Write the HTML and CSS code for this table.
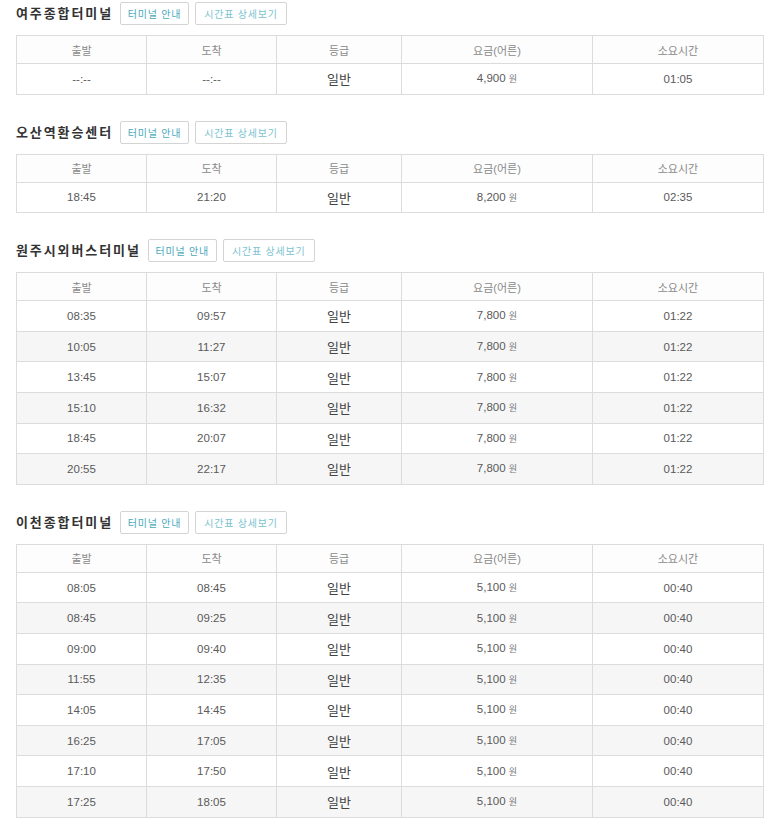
FILE: index.html
```html
<!DOCTYPE html>
<html lang="ko">
<head>
<meta charset="utf-8">
<title>시간표</title>
<link rel="stylesheet" href="styles.css">
</head>
<body>
<div class="page">

<section class="terminal">
  <div class="terminal-head">
    <h2 class="terminal-name">여주종합터미널</h2>
    <a class="btn btn-info">터미널 안내</a>
    <a class="btn btn-detail">시간표 상세보기</a>
  </div>
  <table class="schedule">
    <colgroup><col class="c1"><col class="c2"><col class="c3"><col class="c4"><col class="c5"></colgroup>
    <thead><tr><th>출발</th><th>도착</th><th>등급</th><th>요금(어른)</th><th>소요시간</th></tr></thead>
    <tbody>
      <tr><td>--:--</td><td>--:--</td><td class="grade">일반</td><td>4,900 <span class="won">원</span></td><td>01:05</td></tr>
    </tbody>
  </table>
</section>

<section class="terminal">
  <div class="terminal-head">
    <h2 class="terminal-name">오산역환승센터</h2>
    <a class="btn btn-info">터미널 안내</a>
    <a class="btn btn-detail">시간표 상세보기</a>
  </div>
  <table class="schedule">
    <colgroup><col class="c1"><col class="c2"><col class="c3"><col class="c4"><col class="c5"></colgroup>
    <thead><tr><th>출발</th><th>도착</th><th>등급</th><th>요금(어른)</th><th>소요시간</th></tr></thead>
    <tbody>
      <tr><td>18:45</td><td>21:20</td><td class="grade">일반</td><td>8,200 <span class="won">원</span></td><td>02:35</td></tr>
    </tbody>
  </table>
</section>

<section class="terminal">
  <div class="terminal-head">
    <h2 class="terminal-name">원주시외버스터미널</h2>
    <a class="btn btn-info">터미널 안내</a>
    <a class="btn btn-detail">시간표 상세보기</a>
  </div>
  <table class="schedule">
    <colgroup><col class="c1"><col class="c2"><col class="c3"><col class="c4"><col class="c5"></colgroup>
    <thead><tr><th>출발</th><th>도착</th><th>등급</th><th>요금(어른)</th><th>소요시간</th></tr></thead>
    <tbody>
      <tr><td>08:35</td><td>09:57</td><td class="grade">일반</td><td>7,800 <span class="won">원</span></td><td>01:22</td></tr>
      <tr><td>10:05</td><td>11:27</td><td class="grade">일반</td><td>7,800 <span class="won">원</span></td><td>01:22</td></tr>
      <tr><td>13:45</td><td>15:07</td><td class="grade">일반</td><td>7,800 <span class="won">원</span></td><td>01:22</td></tr>
      <tr><td>15:10</td><td>16:32</td><td class="grade">일반</td><td>7,800 <span class="won">원</span></td><td>01:22</td></tr>
      <tr><td>18:45</td><td>20:07</td><td class="grade">일반</td><td>7,800 <span class="won">원</span></td><td>01:22</td></tr>
      <tr><td>20:55</td><td>22:17</td><td class="grade">일반</td><td>7,800 <span class="won">원</span></td><td>01:22</td></tr>
    </tbody>
  </table>
</section>

<section class="terminal">
  <div class="terminal-head">
    <h2 class="terminal-name">이천종합터미널</h2>
    <a class="btn btn-info">터미널 안내</a>
    <a class="btn btn-detail">시간표 상세보기</a>
  </div>
  <table class="schedule">
    <colgroup><col class="c1"><col class="c2"><col class="c3"><col class="c4"><col class="c5"></colgroup>
    <thead><tr><th>출발</th><th>도착</th><th>등급</th><th>요금(어른)</th><th>소요시간</th></tr></thead>
    <tbody>
      <tr><td>08:05</td><td>08:45</td><td class="grade">일반</td><td>5,100 <span class="won">원</span></td><td>00:40</td></tr>
      <tr><td>08:45</td><td>09:25</td><td class="grade">일반</td><td>5,100 <span class="won">원</span></td><td>00:40</td></tr>
      <tr><td>09:00</td><td>09:40</td><td class="grade">일반</td><td>5,100 <span class="won">원</span></td><td>00:40</td></tr>
      <tr><td>11:55</td><td>12:35</td><td class="grade">일반</td><td>5,100 <span class="won">원</span></td><td>00:40</td></tr>
      <tr><td>14:05</td><td>14:45</td><td class="grade">일반</td><td>5,100 <span class="won">원</span></td><td>00:40</td></tr>
      <tr><td>16:25</td><td>17:05</td><td class="grade">일반</td><td>5,100 <span class="won">원</span></td><td>00:40</td></tr>
      <tr><td>17:10</td><td>17:50</td><td class="grade">일반</td><td>5,100 <span class="won">원</span></td><td>00:40</td></tr>
      <tr><td>17:25</td><td>18:05</td><td class="grade">일반</td><td>5,100 <span class="won">원</span></td><td>00:40</td></tr>
    </tbody>
  </table>
</section>

</div>
</body>
</html>
```

FILE: styles.css
```css
* { box-sizing: border-box; }
html, body {
  margin: 0;
  padding: 0;
  background: #fff;
}
body {
  font-family: "Liberation Sans", "Noto Sans CJK KR", sans-serif;
  color: #555;
}
.page {
  padding: 2px 8px 0 16px;
}
.terminal + .terminal {
  margin-top: 26px;
}
.terminal-head {
  display: flex;
  align-items: center;
  height: 23px;
}
.terminal-name {
  margin: 0 7px 0 0;
  font-size: 13px;
  font-weight: bold;
  letter-spacing: 1.9px;
  color: #333;
  line-height: 23px;
}
.btn {
  display: inline-flex;
  align-items: center;
  justify-content: center;
  height: 23px;
  padding: 0;
  border: 1px solid #d4d4d4;
  border-radius: 2px;
  font-size: 10px;
  letter-spacing: 0.8px;
  color: #49a9bb;
  background: #fff;
  text-decoration: none;
}
.btn-info { width: 69px; }
.btn-detail {
  width: 92px;
  margin-left: 6px;
  color: #7cc3cf;
}
.schedule {
  margin-top: 10px;
  width: 747px;
  border-collapse: collapse;
  table-layout: fixed;
}
.c1 { width: 130px; }
.c2 { width: 130px; }
.c3 { width: 125px; }
.c4 { width: 191px; }
.c5 { width: 171px; }
.schedule th,
.schedule td {
  border: 1px solid #dcdcdc;
  text-align: center;
  padding: 0;
}
.schedule th {
  height: 28px;
  font-size: 11px;
  font-weight: normal;
  color: #8a8a8a;
  background: #fdfdfd;
}
.schedule td {
  height: 30.6px;
  font-size: 11.5px;
  color: #5a5a5a;
}
.schedule tbody tr:nth-child(even) td {
  background: #f6f6f6;
}
.schedule td.grade {
  font-size: 13px;
  color: #444;
}
.won {
  font-size: 9px;
  color: #777;
}
```
